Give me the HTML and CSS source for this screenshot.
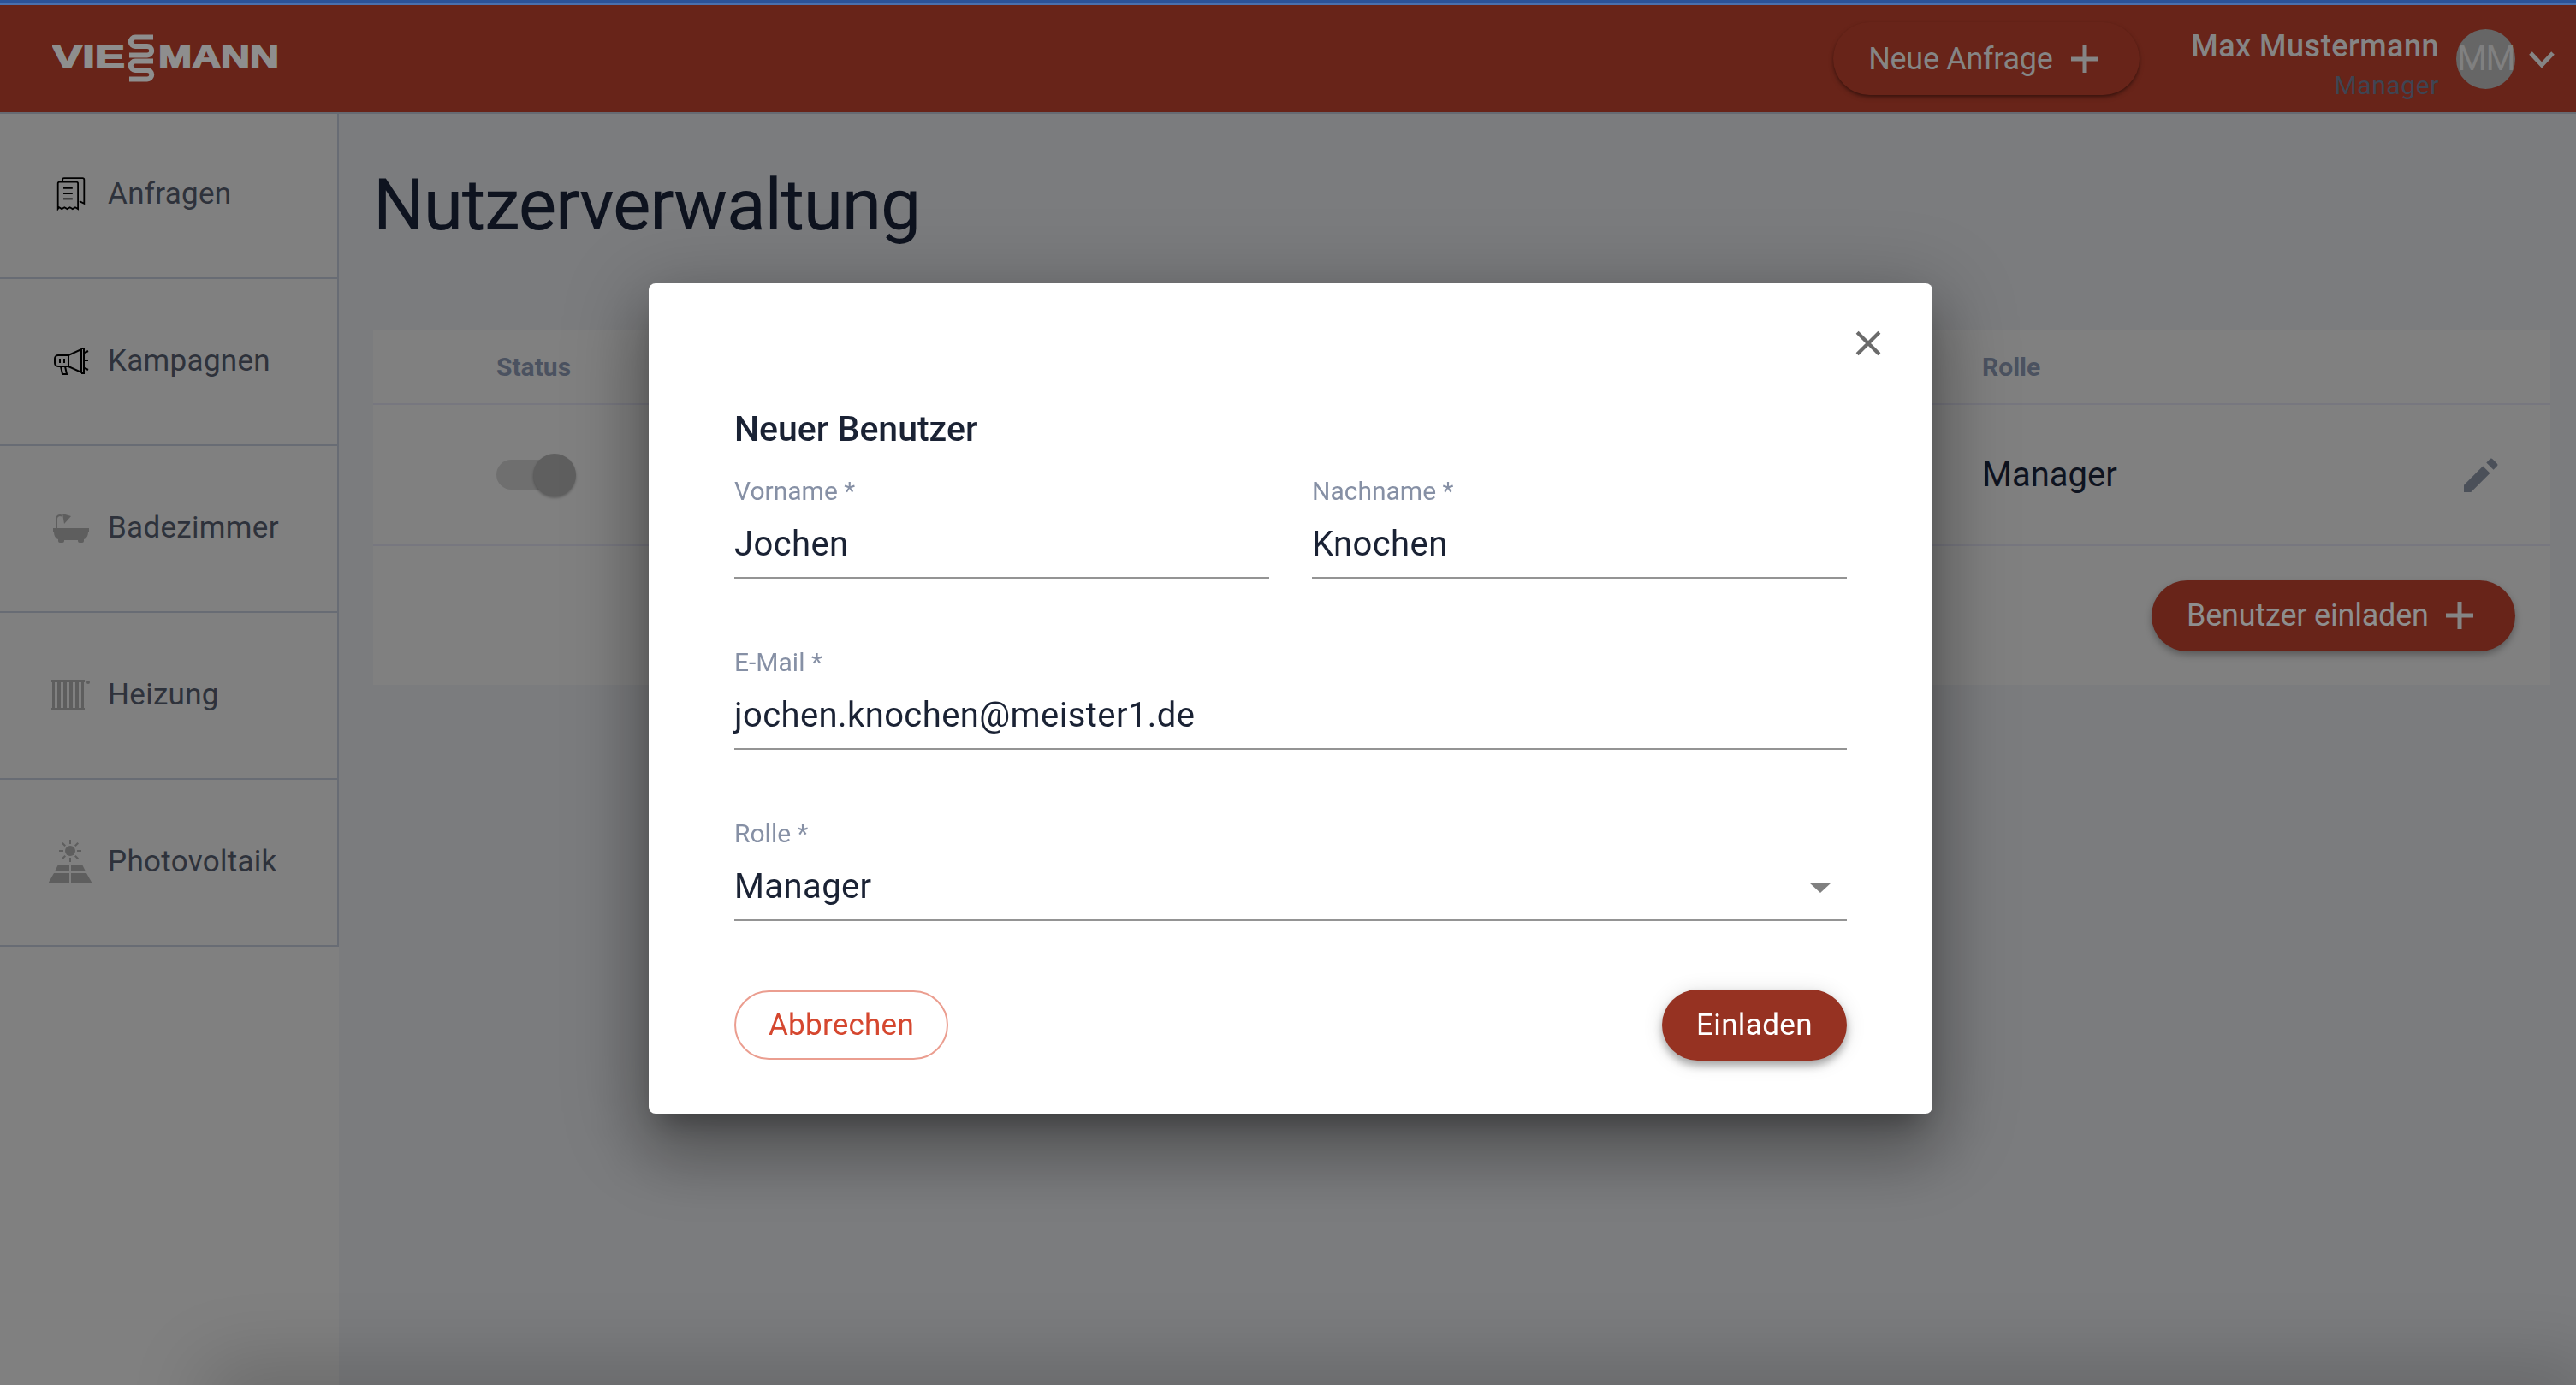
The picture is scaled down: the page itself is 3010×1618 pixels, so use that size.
FILE: index.html
```html
<!DOCTYPE html>
<html lang="de">
<head>
    <meta charset="UTF-8">
    <meta name="viewport" content="width=device-width, initial-scale=1.0">
    <title>Nutzerverwaltung</title>
    <link rel="stylesheet" href="styles.css">
</head>
<body>
    <div class="top-stripe"></div>
    <header class="header">
        <svg class="logo" viewBox="0 0 266 57" width="266" height="57">
            <text x="0" y="39" textLength="85" lengthAdjust="spacingAndGlyphs" class="logo-text">VIE</text>
            <path class="logo-snake" d="M118 3.500H97a5.200 5.200 0 0 0 0 10.500h14a5.200 5.200 0 0 1 0 10.500H90M118 31.500H97a5.200 5.200 0 0 0 0 10.500h14a5.200 5.200 0 0 1 0 10.500H90"/>
            <text x="124" y="39" textLength="141" lengthAdjust="spacingAndGlyphs" class="logo-text">MANN</text>
        </svg>
        <div class="header-right">
            <button class="btn-new" type="button">Neue Anfrage
                <svg class="plus" viewBox="0 0 32 32" width="32" height="32"><path d="M13.500 0h5v13.500H32v5H18.500V32h-5V18.500H0v-5h13.500z"/></svg>
            </button>
            <div class="user">
                <div class="user-name">Max Mustermann</div>
                <div class="user-role">Manager</div>
            </div>
            <div class="avatar">MM</div>
            <svg class="chevron" viewBox="0 0 30 20" width="30" height="20"><path d="M2 3l13 14L28 3"/></svg>
        </div>
    </header>

    <div class="layout">
        <nav class="sidebar">
            <a class="nav-item">
                <span class="nav-icon">
                    <svg viewBox="0 0 40 44" width="40" height="44" class="line-icon">
                        <path d="M9 6V3a2 2 0 0 1 2-2h24a2 2 0 0 1 2 2v31l-6-3"/>
                        <path d="M3 41V8a2 2 0 0 1 2-2h22a2 2 0 0 1 2 2v33l-3.500-2-3.500 2-3.500-2-3.500 2-3.500-2-3.500 2-3.500-2z"/>
                        <path d="M10 14h12M10 21h12M10 28h12"/>
                    </svg>
                </span>
                Anfragen
            </a>
            <a class="nav-item">
                <span class="nav-icon">
                    <svg viewBox="0 0 42 32" width="42" height="32" class="line-icon">
                        <path d="M6 9h12l15-7v27l-15-7H6a4 4 0 0 1-4-4v-5a4 4 0 0 1 4-4z"/>
                        <path d="M33 1h3v29h-3M18 9v13M8 13v5M13 13v5M9 22l2 9h5l-2-9"/>
                        <path d="M37 6l4-2M37 15h4M37 24l4 2"/>
                    </svg>
                </span>
                Kampagnen
            </a>
            <a class="nav-item">
                <span class="nav-icon">
                    <svg viewBox="0 0 42 36" width="42" height="36" class="fill-icon">
                        <path d="M3 24V7a5 5 0 0 1 8-4l-1.500 1.500A3 3 0 0 0 5 7v14H3z"/>
                        <path d="M11 1l10 3-8 9z"/>
                        <path d="M0 18h42v4h-1c0 5-2 8-5 9v2a2 2 0 0 1-2 2h-3a2 2 0 0 1-2-2v-1H13v1a2 2 0 0 1-2 2H8a2 2 0 0 1-2-2v-2c-3-1-5-4-5-9H0z"/>
                    </svg>
                </span>
                Badezimmer
            </a>
            <a class="nav-item">
                <span class="nav-icon">
                    <svg viewBox="0 0 46 38" width="46" height="38" class="fill-icon">
                        <path d="M1 1h39v3h-1v30h1v3H1v-3h1V4H1zM5 4v30h3V4zm7 0v30h3V4zm7 0v30h3V4zm7 0v30h3V4zm7 0v30h3V4z" fill-rule="evenodd"/>
                        <circle cx="44" cy="4" r="2"/>
                    </svg>
                </span>
                Heizung
            </a>
            <a class="nav-item">
                <span class="nav-icon">
                    <svg viewBox="0 0 50 52" width="50" height="52" class="fill-icon">
                        <circle cx="25" cy="13" r="6"/>
                        <path d="M24 0h2v5h-2zM24 21h2v5h-2zM12 12h5v2h-5zM33 12h5v2h-5zM16.500 3l3.500 3.500-1.500 1.500L15 4.500zM31.500 18l3.500 3.500-1.500 1.500-3.500-3.500zM33.500 3L35 4.500 31.500 8 30 6.500zM18.500 18l1.500 1.500L16.500 23 15 21.500z"/>
                        <path d="M11 29h13v8H7zM26 29h13l4 8H26zM6 39h18v12H1a1 1 0 0 1-1-1.500zM26 39h18l6 10.500a1 1 0 0 1-1 1.500H26z"/>
                    </svg>
                </span>
                Photovoltaik
            </a>
        </nav>

        <main class="content">
            <h1 class="page-title">Nutzerverwaltung</h1>
            <section class="card">
                <div class="table-row table-head">
                    <div class="col-status">Status</div>
                    <div class="col-role">Rolle</div>
                </div>
                <div class="table-row table-body">
                    <div class="col-status">
                        <div class="toggle"><span class="toggle-knob"></span></div>
                    </div>
                    <div class="col-role">
                        Manager
                        <svg class="pencil" viewBox="0 0 40 40" width="40" height="40"><path d="M0 31.700V40h8.300L30.500 17.800l-8.300-8.300zM38.700 9.600a2.200 2.200 0 0 0 0-3.100l-5.200-5.200a2.200 2.200 0 0 0-3.100 0l-4.100 4.100 8.300 8.300z"/></svg>
                    </div>
                </div>
                <div class="card-footer">
                    <button class="btn-invite" type="button">Benutzer einladen
                        <svg class="plus" viewBox="0 0 32 32" width="32" height="32"><path d="M13.500 0h5v13.500H32v5H18.500V32h-5V18.500H0v-5h13.500z"/></svg>
                    </button>
                </div>
            </section>
        </main>
    </div>

    <div class="bottom-shade"></div>

    <div class="overlay">
        <form class="modal">
            <button class="modal-close" type="button" aria-label="close">
                <svg viewBox="0 0 28 28" width="30" height="30"><path d="M2 2l24 24M26 2L2 26"/></svg>
            </button>
            <h2 class="modal-title">Neuer Benutzer</h2>
            <div class="field-row">
                <div class="field">
                    <label class="field-label">Vorname *</label>
                    <div class="field-value">Jochen</div>
                </div>
                <div class="field">
                    <label class="field-label">Nachname *</label>
                    <div class="field-value">Knochen</div>
                </div>
            </div>
            <div class="field">
                <label class="field-label">E-Mail *</label>
                <div class="field-value">jochen.knochen@meister1.de</div>
            </div>
            <div class="field">
                <label class="field-label">Rolle *</label>
                <div class="field-value select">Manager<span class="select-arrow"></span></div>
            </div>
            <div class="modal-actions">
                <button class="btn-cancel" type="button">Abbrechen</button>
                <button class="btn-submit" type="button">Einladen</button>
            </div>
        </form>
    </div>
</body>
</html>
```

FILE: styles.css
```css
* {
    box-sizing: border-box;
}
html, body {
    height: 100%;
}
body {
    margin: 0;
    overflow: hidden;
    background-color: #7b7c7e;
    font-family: Roboto, "Liberation Sans", sans-serif;
    color: #0e131f;
}
button {
    font-family: inherit;
    cursor: pointer;
}
.top-stripe {
    height: 6px;
    background-color: #4a70ae;
    border-top: 4px solid #2b5399;
}
.header {
    height: 127px;
    display: flex;
    align-items: center;
    justify-content: space-between;
    padding-left: 61px;
    padding-right: 25px;
    background-color: #682419;
    border-bottom: 2px solid #666a72;
}
.logo-text {
    font-family: "Liberation Sans", sans-serif;
    font-weight: 700;
    font-size: 36px;
    fill: #8e8e8e;
    stroke: #8e8e8e;
    stroke-width: 1.5;
}
.logo-snake {
    fill: none;
    stroke: #8e8e8e;
    stroke-width: 6;
}
.header-right {
    display: flex;
    align-items: center;
}
.plus {
    fill: #858585;
}
.btn-new {
    width: 358px;
    height: 85px;
    display: flex;
    align-items: center;
    justify-content: space-between;
    padding: 0 48px 0 41px;
    margin-right: 60px;
    border: 0;
    border-radius: 43px;
    background-color: #682419;
    color: #858585;
    font-size: 36px;
    letter-spacing: -0.3px;
    box-shadow: 0 3px 6px -1px rgba(0, 0, 0, 0.35), 0 2px 3px rgba(0, 0, 0, 0.2);
}
.user {
    text-align: right;
    margin-right: 20px;
    padding-top: 16px;
}
.user-name {
    font-size: 36px;
    line-height: 46px;
    letter-spacing: 0.5px;
    font-weight: 500;
    color: #858585;
}
.user-role {
    font-size: 30px;
    line-height: 46px;
    letter-spacing: 0.6px;
    color: #3e4553;
}
.avatar {
    width: 69px;
    height: 70px;
    display: flex;
    align-items: center;
    justify-content: center;
    border-radius: 50%;
    background-color: #666666;
    color: #808080;
    font-size: 40px;
    letter-spacing: -1.5px;
    margin-right: 16px;
}
.chevron {
    fill: none;
    stroke: #858585;
    stroke-width: 5;
}

.layout {
    display: flex;
    height: 1485px;
}
.sidebar {
    width: 396px;
    background-color: #808080;
}
.nav-item {
    height: 195px;
    display: flex;
    align-items: center;
    padding-bottom: 2px;
    border-right: 2px solid #686c74;
    border-bottom: 2px solid #686c74;
    font-size: 35px;
    letter-spacing: 0.3px;
    color: #2e323b;
}
.nav-item:first-child {
    height: 193px;
    padding-bottom: 4px;
}
.nav-icon {
    width: 126px;
    padding-left: 57px;
    display: flex;
}
.line-icon {
    fill: none;
    stroke: #000;
    stroke-width: 2;
    width: 36px;
}
.nav-item:nth-child(2) .line-icon {
    width: 42px;
    margin-left: 5px;
}
.nav-item:first-child .line-icon {
    margin-left: 8px;
}
.fill-icon {
    fill: #5e5e5e;
}
.nav-item:nth-child(3) .fill-icon {
    margin-left: 5px;
}
.nav-item:nth-child(4) .fill-icon {
    margin-left: 2px;
}

.content {
    flex: 1;
    padding: 57px 30px 0 40px;
}
.page-title {
    margin: 0 0 96px 0;
    font-size: 84px;
    line-height: 100px;
    letter-spacing: -1.25px;
    font-weight: 400;
    color: #0e131f;
}
.card {
    height: 414px;
    background-color: #808080;
}
.table-row {
    display: flex;
    align-items: center;
    justify-content: space-between;
    border-bottom: 2px solid #77777f;
}
.col-status {
    padding-left: 144px;
}
.col-role {
    width: 664px;
    display: flex;
    align-items: center;
    justify-content: space-between;
    padding-right: 61px;
}
.table-head {
    height: 87px;
    font-size: 30px;
    font-weight: 700;
    color: #4b5260;
}
.table-body {
    height: 165px;
    font-size: 40px;
}
.toggle {
    position: relative;
    width: 82px;
    height: 35px;
    border-radius: 18px;
    background-color: #6f6f6f;
}
.toggle-knob {
    position: absolute;
    right: -11px;
    top: -7px;
    width: 50px;
    height: 50px;
    border-radius: 50%;
    background-color: #5f5f5f;
    box-shadow: 0 2px 3px rgba(0, 0, 0, 0.25);
}
.pencil {
    fill: #4b5059;
}
.card-footer {
    display: flex;
    justify-content: flex-end;
    padding: 40px 41px 0 0;
}
.btn-invite {
    width: 425px;
    height: 83px;
    display: flex;
    align-items: center;
    justify-content: space-between;
    padding: 0 49px 2px 41px;
    border: 0;
    border-radius: 42px;
    background-color: #682419;
    color: #8e8e8e;
    font-size: 36px;
    letter-spacing: -0.2px;
    box-shadow: 0 4px 8px rgba(0, 0, 0, 0.3);
}
.bottom-shade {
    position: absolute;
    left: 260px;
    right: 0;
    top: 1618px;
    height: 40px;
    box-shadow: 0 0 90px 20px rgba(0, 0, 0, 0.2);
}

.overlay {
    position: fixed;
    top: 0;
    right: 0;
    bottom: 0;
    left: 0;
    display: flex;
    justify-content: center;
    align-items: flex-start;
    padding: 331px 0 0 6px;
}
.modal {
    position: relative;
    width: 1500px;
    height: 970px;
    padding: 140px 100px 0;
    border-radius: 8px;
    background-color: #fff;
    box-shadow: 0 22px 30px -14px rgba(0, 0, 0, 0.3), 0 48px 76px 6px rgba(0, 0, 0, 0.2), 0 18px 92px 16px rgba(0, 0, 0, 0.2);
}
.modal-close {
    position: absolute;
    top: 55px;
    right: 60px;
    padding: 0;
    border: 0;
    background: none;
    display: flex;
}
.modal-close svg {
    fill: none;
    stroke: #6b6b6b;
    stroke-width: 4;
}
.modal-title {
    margin: 0 0 21px;
    font-size: 41px;
    line-height: 60px;
    font-weight: 500;
    color: #1a2234;
}
.field-row {
    display: grid;
    grid-template-columns: 1fr 1fr;
    gap: 50px;
}
.field {
    height: 200px;
}
.field-label {
    display: block;
    height: 44px;
    padding-top: 4px;
    font-size: 30px;
    line-height: 36px;
    color: #8690a5;
}
.field-value {
    position: relative;
    height: 80px;
    padding-top: 12px;
    font-size: 40px;
    line-height: 56px;
    letter-spacing: 0.4px;
    color: #1a2234;
    border-bottom: 2px solid #949494;
}
.select-arrow {
    position: absolute;
    right: 18px;
    top: 35px;
    border-left: 13px solid transparent;
    border-right: 13px solid transparent;
    border-top: 12px solid #808080;
}
.modal-actions {
    display: flex;
    justify-content: space-between;
    align-items: center;
    margin-top: 4px;
}
.btn-cancel {
    width: 250px;
    height: 81px;
    border: 2px solid #eb9e90;
    border-radius: 41px;
    background: #fff;
    color: #d5472f;
    font-size: 35px;
    letter-spacing: 0.25px;
}
.btn-submit {
    width: 216px;
    height: 83px;
    border: 0;
    border-radius: 42px;
    background-color: #963222;
    color: #fff;
    font-size: 35px;
    letter-spacing: 0.4px;
    box-shadow: 0 6px 10px rgba(0, 0, 0, 0.3), 0 2px 24px rgba(0, 0, 0, 0.12);
}
```
